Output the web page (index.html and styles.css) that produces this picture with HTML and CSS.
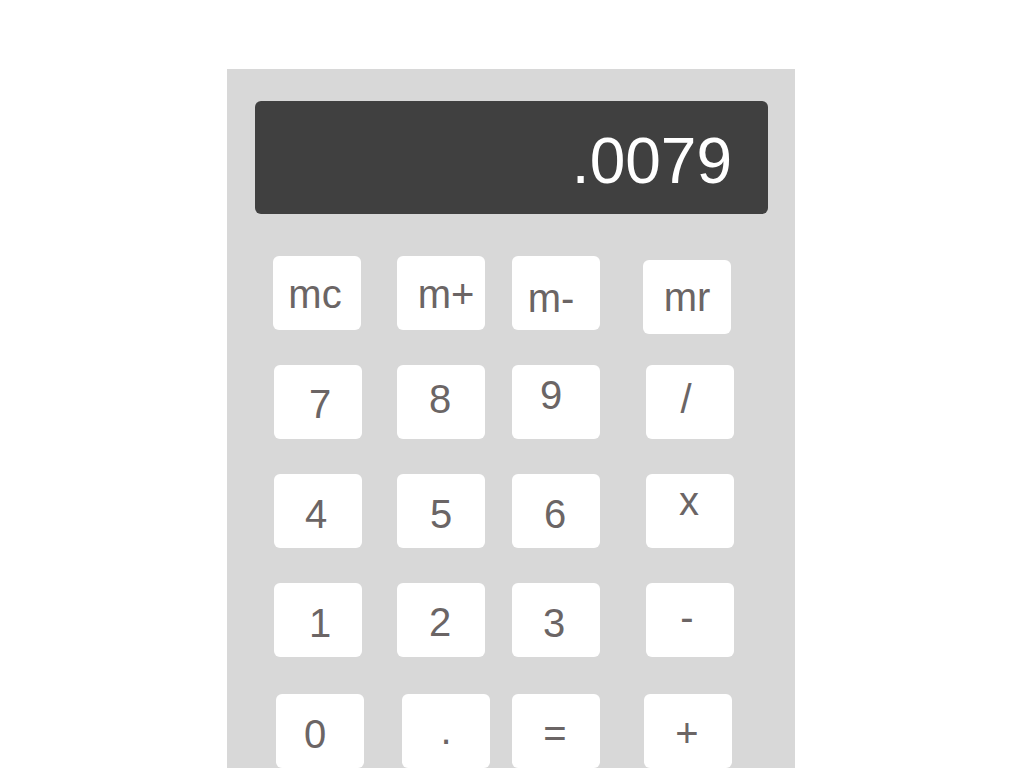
FILE: index.html
```html
<!DOCTYPE html>
<html lang="en">
<head>
<meta charset="utf-8">
<title>Calculator</title>
<link rel="stylesheet" href="styles.css">
</head>
<body>
<div class="calc">
  <div class="display">.0079</div>
  <div class="keys">
    <div class="row row-mem">
      <div class="key k-mc"><span>mc</span></div>
      <div class="key k-mplus"><span>m+</span></div>
      <div class="key k-mminus"><span>m-</span></div>
      <div class="key k-mr"><span>mr</span></div>
    </div>
    <div class="row">
      <div class="key k-7"><span>7</span></div>
      <div class="key k-8"><span>8</span></div>
      <div class="key k-9"><span>9</span></div>
      <div class="key k-div"><span>/</span></div>
    </div>
    <div class="row">
      <div class="key k-4"><span>4</span></div>
      <div class="key k-5"><span>5</span></div>
      <div class="key k-6"><span>6</span></div>
      <div class="key k-mul"><span>x</span></div>
    </div>
    <div class="row">
      <div class="key k-1"><span>1</span></div>
      <div class="key k-2"><span>2</span></div>
      <div class="key k-3"><span>3</span></div>
      <div class="key k-sub"><span>-</span></div>
    </div>
    <div class="row row-last">
      <div class="key k-0"><span>0</span></div>
      <div class="key k-dot"><span>.</span></div>
      <div class="key k-eq"><span>=</span></div>
      <div class="key k-add"><span>+</span></div>
    </div>
  </div>
</div>
</body>
</html>
```

FILE: styles.css
```css
html, body {
  margin: 0;
  padding: 0;
  background: #ffffff;
  font-family: "Liberation Sans", Arial, sans-serif;
}

.calc {
  width: 568px;
  margin: 69px 0 0 227px;
  background: #d8d8d8;
  padding: 32px 0 60px 0;
  box-sizing: border-box;
}

.display {
  margin-left: 28px;
  width: 513px;
  height: 113px;
  box-sizing: border-box;
  background: #404040;
  border-radius: 6px;
  color: #ffffff;
  font-size: 64px;
  line-height: 74px;
  padding: 23px 36px 0 0;
  text-align: right;
}

.keys {
  display: flex;
  flex-direction: column;
  gap: 35px;
  margin-top: 42px;
}

.row {
  display: flex;
  align-items: flex-start;
  height: 74px;
  padding-left: 47px;
}

.row-last {
  margin-top: 2px;
  padding-left: 49px;
}

.row-mem {
  padding-left: 46px;
}

.key {
  width: 88px;
  height: 74px;
  box-sizing: border-box;
  background: #ffffff;
  border-radius: 6px;
  display: flex;
  justify-content: center;
  padding-top: 16px;
  color: #6b6565;
  font-size: 40px;
  line-height: 46px;
  flex: none;
}

.key span {
  display: block;
  transform: translate(var(--dx, 0px), var(--dy, 0px));
}

.key:nth-child(2) { margin-left: 35px; }
.key:nth-child(3) { margin-left: 27px; }
.key:nth-child(4) { margin-left: 46px; }

.row-mem .key:nth-child(2) { margin-left: 36px; }
.row-mem .key:nth-child(4) { margin-left: 43px; margin-top: 4px; }

.row-last .key:nth-child(2) { margin-left: 38px; }
.row-last .key:nth-child(3) { margin-left: 22px; }
.row-last .key:nth-child(4) { margin-left: 44px; }

.k-mc { --dx: -2px; --dy: -1px; }
.k-mplus { --dx: 5px; --dy: -1px; }
.k-mminus { --dx: -5px; --dy: 3px; }
.k-mr { --dx: 0px; --dy: -2px; }

.k-7 { --dx: 2px; --dy: 0px; }
.k-8 { --dx: -1px; --dy: -5px; }
.k-9 { --dx: -5px; --dy: -9px; }
.k-div { --dx: -4px; --dy: -5px; }

.k-4 { --dx: -2px; --dy: 1px; }
.k-5 { --dx: 0px; --dy: 1px; }
.k-6 { --dx: -1px; --dy: 1px; }
.k-mul { --dx: -1px; --dy: -12px; }

.k-1 { --dx: 2px; --dy: 1px; }
.k-2 { --dx: -1px; --dy: 0px; }
.k-3 { --dx: -2px; --dy: 1px; }
.k-sub { --dx: -3px; --dy: -5px; }

.k-0 { --dx: -5px; --dy: 1px; }
.k-dot { --dx: 0px; --dy: -3px; }
.k-eq { --dx: -1px; --dy: 0px; }
.k-add { --dx: -1px; --dy: 0px; }
```
